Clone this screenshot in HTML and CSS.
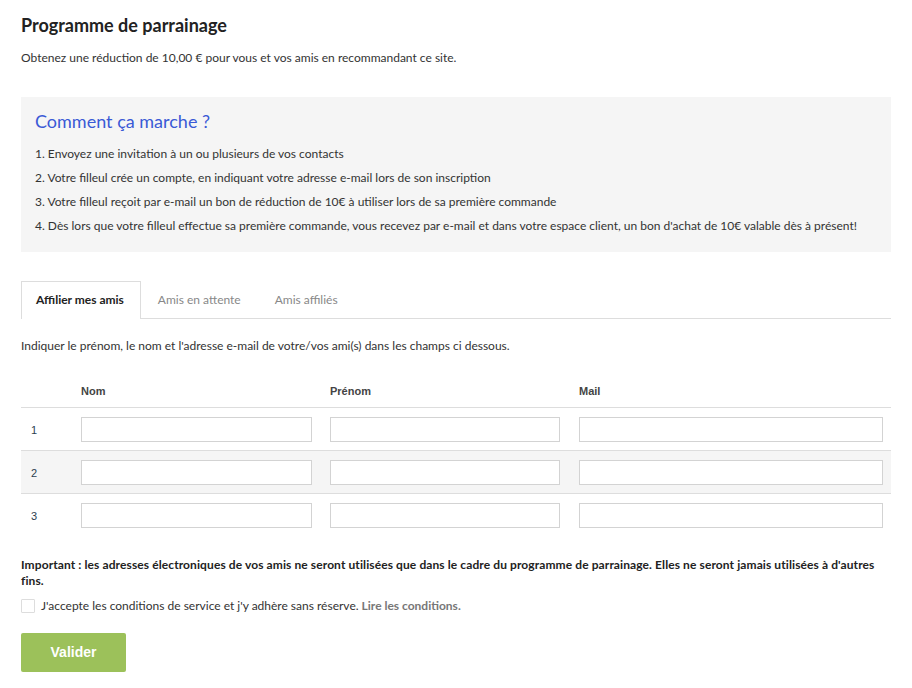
FILE: index.html
```html
<!DOCTYPE html>
<html lang="fr">
<head>
<meta charset="utf-8">
<title>Programme de parrainage</title>
<link rel="stylesheet" href="styles.css">
</head>
<body>
<div class="page">
  <h1 class="title">Programme de parrainage</h1>
  <p class="intro">Obtenez une réduction de 10,00 € pour vous et vos amis en recommandant ce site.</p>

  <section class="how">
    <h2 class="how-title">Comment ça marche ?</h2>
    <p class="step">1. Envoyez une invitation à un ou plusieurs de vos contacts</p>
    <p class="step">2. Votre filleul crée un compte, en indiquant votre adresse e-mail lors de son inscription</p>
    <p class="step">3. Votre filleul reçoit par e-mail un bon de réduction de 10€ à utiliser lors de sa première commande</p>
    <p class="step">4. Dès lors que votre filleul effectue sa première commande, vous recevez par e-mail et dans votre espace client, un bon d'achat de 10€ valable dès à présent!</p>
  </section>

  <nav class="tabs">
    <a class="tab active">Affilier mes amis</a>
    <a class="tab">Amis en attente</a>
    <a class="tab">Amis affiliés</a>
  </nav>

  <p class="hint">Indiquer le prénom, le nom et l'adresse e-mail de votre/vos ami(s) dans les champs ci dessous.</p>

  <table class="friends">
    <colgroup>
      <col class="c-num"><col class="c-a"><col class="c-b"><col class="c-c">
    </colgroup>
    <thead>
      <tr><th></th><th>Nom</th><th>Prénom</th><th>Mail</th></tr>
    </thead>
    <tbody>
      <tr><td class="num">1</td><td><input class="field f-a" type="text"></td><td><input class="field f-b" type="text"></td><td><input class="field f-c" type="text"></td></tr>
      <tr class="alt"><td class="num">2</td><td><input class="field f-a" type="text"></td><td><input class="field f-b" type="text"></td><td><input class="field f-c" type="text"></td></tr>
      <tr><td class="num">3</td><td><input class="field f-a" type="text"></td><td><input class="field f-b" type="text"></td><td><input class="field f-c" type="text"></td></tr>
    </tbody>
  </table>

  <p class="important">Important : les adresses électroniques de vos amis ne seront utilisées que dans le cadre du programme de parrainage. Elles ne seront jamais utilisées à d'autres fins.</p>

  <label class="accept"><span class="box"></span>J'accepte les conditions de service et j'y adhère sans réserve. <a class="link">Lire les conditions.</a></label>

  <button class="submit" type="button">Valider</button>
</div>
</body>
</html>
```
FILE: styles.css
```css
* { box-sizing: border-box; }
body {
  margin: 0;
  background: #fff;
  font-family: Lato, "Open Sans", sans-serif;
  color: #333;
}
.page {
  padding: 14px 21px 0 21px;
}
.title {
  margin: 0;
  font-size: 18px;
  line-height: 22px;
  font-weight: 700;
  color: #222;
}
.intro {
  margin: 14px 0 0;
  font-size: 12px;
  line-height: 16px;
}
.how {
  margin-top: 31px;
  background: #f5f5f5;
  padding: 12px 14px 18px;
  height: 155px;
}
.how-title {
  margin: 0 0 13px;
  font-size: 18px;
  line-height: 24px;
  font-weight: 400;
  color: #3a5ad6;
}
.step {
  margin: 0 0 8px;
  font-size: 12px;
  line-height: 16px;
}
.tabs {
  display: flex;
  margin-top: 29px;
  border-bottom: 1px solid #ddd;
  height: 38px;
}
.tab {
  display: block;
  padding: 0 16px;
  font-size: 12px;
  line-height: 36px;
  color: #888;
  border: 1px solid transparent;
  border-bottom: 0;
}
.tab.active {
  padding: 0 16px 0 14px;
  color: #222;
  font-weight: 700;
  border-color: #ddd;
  background: #fff;
  height: 38px;
}
.hint {
  margin: 19px 0 0;
  font-size: 12px;
  line-height: 16px;
}
.friends {
  margin-top: 20px;
  width: 870px;
  border-collapse: collapse;
  table-layout: fixed;
  font-family: "Liberation Sans", Arial, sans-serif;
}
.c-num { width: 60px; }
.c-a { width: 249px; }
.c-b { width: 249px; }
.c-c { width: 312px; }
.friends th {
  text-align: left;
  font-size: 11px;
  font-weight: 700;
  color: #444;
  padding: 0 0 10px;
  height: 33px;
  vertical-align: bottom;
  border-bottom: 1px solid #ddd;
}
.friends td {
  padding: 9px 0 8px;
  border-bottom: 1px solid #ddd;
  vertical-align: middle;
}
.friends tbody tr:last-child td { border-bottom: 0; }
.friends tr.alt td { background: #f5f5f5; }
.friends td.num {
  padding-left: 10px;
  padding-top: 11px;
  font-size: 11px;
  color: #2c3e50;
}
.field {
  display: block;
  height: 25px;
  border: 1px solid #d3d3d3;
  background: #fff;
  margin: 0;
  padding: 0 6px;
}
.f-a { width: 231px; }
.f-b { width: 230px; }
.f-c { width: 304px; }
.important {
  margin: 21px 0 0;
  font-size: 12px;
  line-height: 16px;
  font-weight: 700;
  letter-spacing: 0.1px;
  color: #222;
}
.accept {
  display: flex;
  align-items: center;
  margin-top: 9px;
  font-size: 12px;
  line-height: 16px;
  color: #333;
}
.box {
  width: 14px;
  height: 14px;
  border: 1px solid #ddd;
  background: #fff;
  margin-right: 6px;
  border-radius: 1px;
}
.link {
  color: #777;
  font-weight: 700;
  margin-left: 3px;
}
.submit {
  display: block;
  margin-top: 19px;
  width: 105px;
  height: 39px;
  border: 0;
  border-radius: 2px;
  background: #9cc15a;
  color: #fff;
  font-family: "Liberation Sans", Arial, sans-serif;
  font-weight: 700;
  font-size: 14px;
}
```
